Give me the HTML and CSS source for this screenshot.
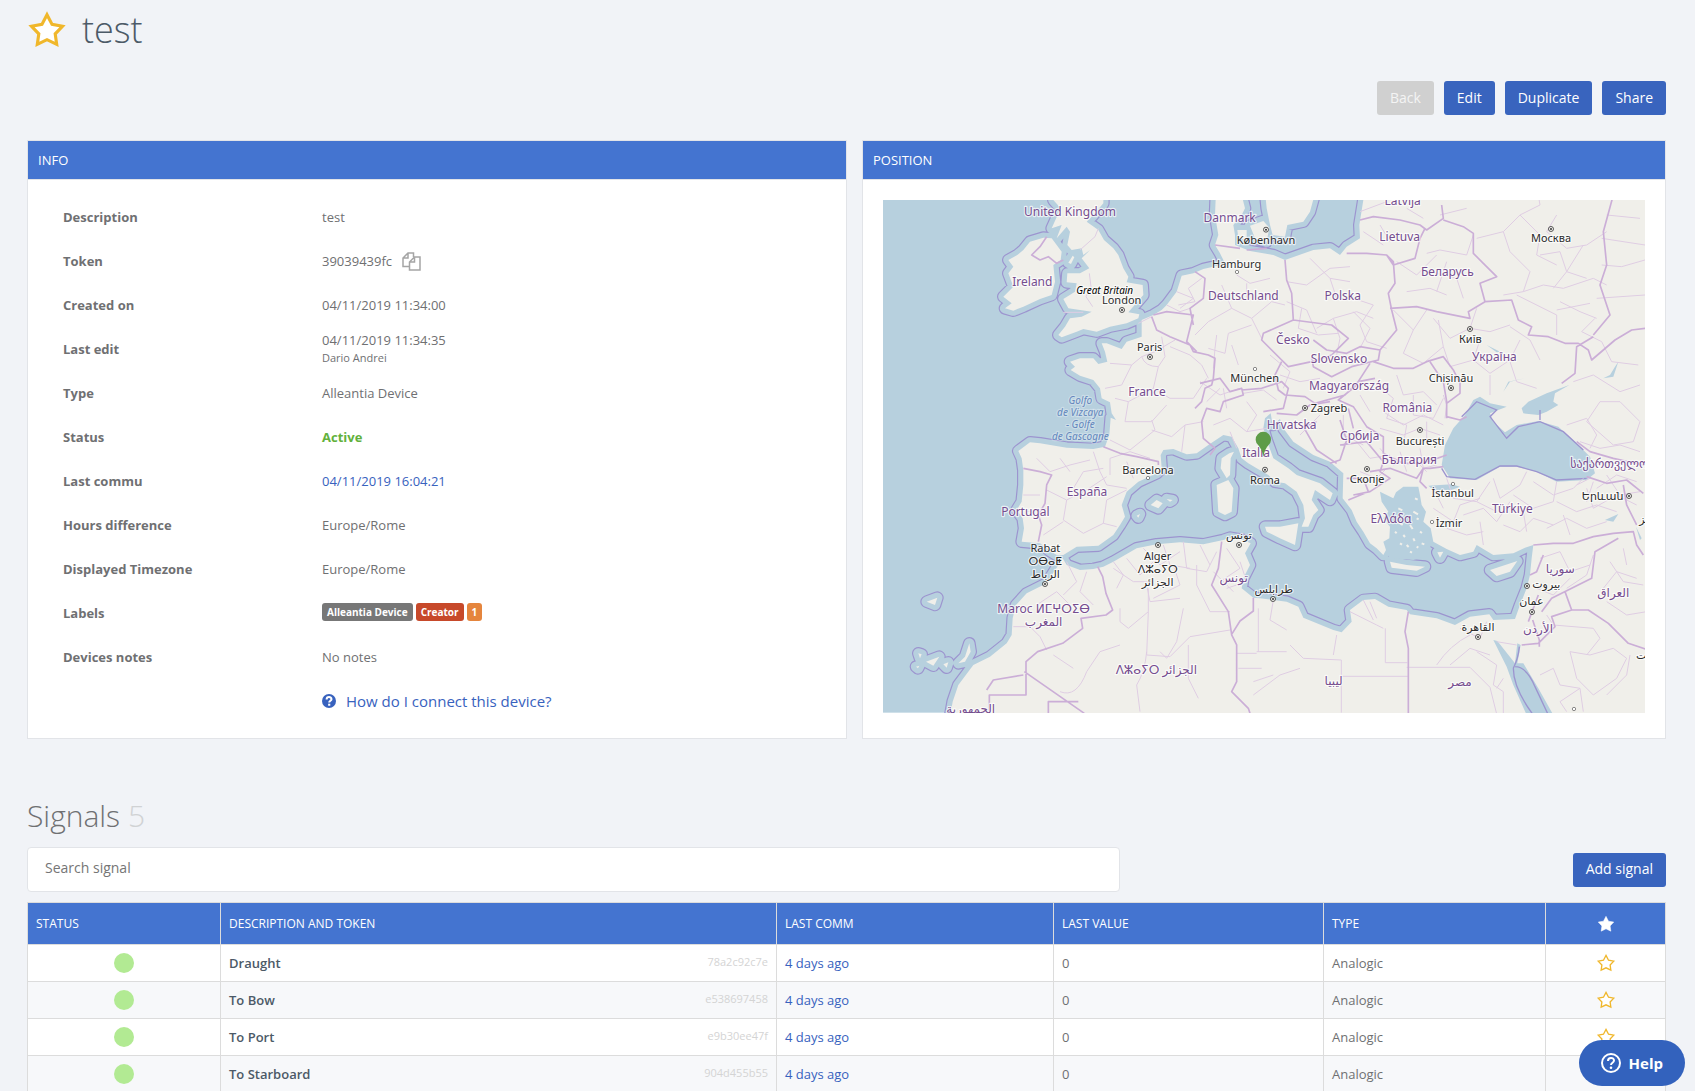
FILE: index.html
```html
<!DOCTYPE html>
<html lang="en">
<head>
    <meta charset="UTF-8">
    <meta name="viewport" content="width=device-width, initial-scale=1.0">
    <title>test</title>
    <link rel="stylesheet" href="styles.css">
</head>
<body>

<svg class="sprite" aria-hidden="true">
    <symbol id="star" viewBox="0 0 38 38">
        <path d="M19 4.500l4.800 9.200 9.900 1.700-6.900 7.300 1.400 9.900-9.200-4.400-9.200 4.400 1.400-9.900-6.900-7.300 9.900-1.700z"/>
    </symbol>
    <!-- cities: capital and plain dot -->
    <symbol id="capital" viewBox="0 0 20 20">
        <circle cx="10" cy="10" r="7.500" fill="#f7f6f3" stroke="#333" stroke-width="2.500"/>
        <circle cx="10" cy="10" r="3" fill="#333"/>
    </symbol>
    <symbol id="city" viewBox="0 0 20 20">
        <circle cx="10" cy="10" r="5" fill="#fff" stroke="#555" stroke-width="2"/>
    </symbol>
</svg>

<main class="page">
    <header class="title">
        <svg class="title-star"><use href="#star"/></svg>
        <h1>test</h1>
    </header>

    <div class="actions">
        <button class="btn" disabled>Back</button>
        <button class="btn">Edit</button>
        <button class="btn">Duplicate</button>
        <button class="btn">Share</button>
    </div>

    <div class="panels">
        <section class="panel">
            <h2 class="panel-head">INFO</h2>
            <dl class="info">
                <dt>Description</dt>
                <dd>test</dd>
                <dt>Token</dt>
                <dd>39039439fc
                    <button class="copy" aria-label="Copy token">
                        <svg viewBox="0 0 19 19">
                            <path d="M7 14.500H1V6l5-5h5.500v4M1 6h5V1M7.500 10v8h10.500V5h-5.500zM12.500 5v5h-5"/>
                        </svg>
                    </button>
                </dd>
                <dt>Created on</dt>
                <dd>04/11/2019 11:34:00</dd>
                <dt>Last edit</dt>
                <dd><div class="edit">04/11/2019 11:34:35<small>Dario Andrei</small></div></dd>
                <dt>Type</dt>
                <dd>Alleantia Device</dd>
                <dt>Status</dt>
                <dd class="active">Active</dd>
                <dt>Last commu</dt>
                <dd><a href="#">04/11/2019 16:04:21</a></dd>
                <dt>Hours difference</dt>
                <dd>Europe/Rome</dd>
                <dt>Displayed Timezone</dt>
                <dd>Europe/Rome</dd>
                <dt>Labels</dt>
                <dd class="labels">
                    <span class="label">Alleantia Device</span>
                    <span class="label red">Creator</span>
                    <span class="label orange">1</span>
                </dd>
                <dt>Devices notes</dt>
                <dd>No notes</dd>
                <dd class="howto">
                    <a href="#">
                        <svg viewBox="0 0 13 13">
                            <circle cx="6.500" cy="6.500" r="6.500" fill="#3862be"/>
                            <path d="M4.300 5C4.300 2.200 8.800 2.200 8.800 4.800 8.800 6.300 6.700 6.300 6.700 8" fill="none" stroke="#fff" stroke-width="1.900"/>
                            <path d="M5.700 9h2v1.900h-2z" fill="#fff"/>
                        </svg>
                        How do I connect this device?
                    </a>
                </dd>
            </dl>
        </section>

        <section class="panel">
            <h2 class="panel-head">POSITION</h2>
            <div class="map-wrap">
                <svg class="map" viewBox="9 15 2286 1538" role="img" aria-label="Map of Europe">
                    <defs>
                        <path id="land" d="M1010 -60L1005 60 1015 120 1005 150 1020 175 1035 205 1000 215 970 222 940 235 905 242 890 290 860 330 845 345 820 360 785 375 785 425 740 440 725 462 680 445 665 445 675 470 682 500 655 507 640 490 600 490 570 500 585 515 572 525 600 542 640 555 660 580 665 610 690 622 695 655 708 675 692 668 688 720 675 755 640 762 560 758 480 745 450 742 415 768 425 790 430 825 430 870 425 920 410 945 428 970 432 1000 425 1040 480 1045 495 1055 510 1068 530 1080 550 1080 590 1055 655 1052 700 1020 720 990 735 965 725 930 740 890 775 860 830 835 845 820 842 780 850 765 880 762 920 778 950 775 985 750 1030 720 1055 725 1075 760 1085 790 1105 805 1130 820 1165 840 1185 860 1215 865 1250 890 1270 930 1275 970 1265 995 1285 995 1300 960 1315 945 1295 915 1305 885 1350 915 1358 895 1320 865 1250 840 1225 820 1180 790 1160 735 1150 700 1155 670 1172 655 1178 690 1200 672 1210 700 1240 740 1300 780 1350 800 1390 835 1388 910 1415 945 1430 980 1450 1010 1470 1045 1490 1060 1510 1080 1518 1065 1510 1040 1528 1030 1530 995 1510 970 1525 950 1505 920 1500 890 1540 910 1548 892 1570 875 1615 875 1620 900 1625 930 1638 950 1630 980 1652 1000 1660 1040 1700 1062 1740 1080 1780 1070 1790 1050 1840 1080 1900 1075 1935 1058 1960 1050 1955 1090 1950 1140 1940 1180 1920 1230 1905 1272 1840 1275 1828 1258 1770 1265 1725 1290 1670 1270 1590 1258 1580 1245 1525 1235 1485 1212 1450 1215 1410 1245 1415 1280 1385 1312 1360 1305 1270 1268 1255 1235 1220 1220 1140 1210 1120 1208 1085 1180 1090 1150 1110 1110 1095 1075 1112 1045 1090 1035 1050 1028 1030 1035 970 1048 900 1042 830 1048 770 1060 700 1100 670 1115 640 1122 600 1125 560 1110 548 1090 535 1110 522 1130 500 1165 440 1195 408 1230 398 1270 395 1320 380 1345 330 1385 280 1410 235 1470 218 1520 200 1620 2400 1620 2400 -60 1450 -60 1450 15 1438 90 1440 130 1400 155 1380 180 1350 160 1300 165 1215 195 1180 180 1110 168 1065 150 1065 120 1060 90 1085 60 1095 40 1070 -60z
                        M520 -60L520 15 542 40 515 100 545 90 530 130 560 95 570 110 562 150 575 165 605 160 610 180 630 165 605 190 628 220 600 235 562 235 560 262 590 265 585 290 550 312 565 340 600 345 635 350 605 365 570 370 555 395 535 420 545 427 590 410 610 402 650 410 690 395 740 385 775 370 778 358 745 352 790 300 788 270 740 262 745 245 730 220 715 180 700 160 672 135 655 105 620 80 640 60 670 25 670 -60z
                        M430 165L450 140 490 128 515 130 545 170 542 195 520 210 525 260 515 300 480 312 430 335 400 347 375 340 395 325 370 305 400 275 385 235 400 215 385 195 412 180z
                        M565 203L578 182 583 187 573 207z
                        M1110 92L1150 78 1168 98 1160 140 1125 130z M1072 105L1100 105 1100 135 1075 130z
                        M1150 -60L1160 40 1170 90 1178 120 1215 125 1222 90 1270 80 1290 50 1320 -60z
                        M1062 770L1048 775 1025 790 1022 820 1040 850 1050 840 1052 790z
                        M1010 870L1045 855 1060 880 1055 950 1035 960 1015 950z
                        M1155 995L1200 995 1255 985 1245 1050 1200 1030 1160 1010z
                        M1530 1100L1580 1110 1635 1115 1610 1127 1535 1118z M1672 1072L1690 1070 1680 1088z
                        M1830 1125L1912 1098 1890 1130 1850 1143z
                        M812 930L830 915 848 925 835 940z M860 912L878 915 870 920z M770 962L780 957 775 968z
                        M235 1405L255 1385 268 1345 272 1370 255 1400z M138 1400L178 1385 160 1412z M190 1408L205 1402 200 1418z M115 1375L125 1378 120 1390z M108 1415L118 1412 114 1420z M140 1220L172 1208 165 1230z"/>
                    </defs>
                    <rect x="9" y="15" width="2286" height="1538" class="sea"/>

                    <!-- territorial waters -->
                    <use href="#land" class="waters"/>
                    <use href="#land" class="waters-in"/>
                    <path class="sea" d="M1500 880L1640 870 1655 1000 1650 1080 1600 1095 1530 1090 1500 1050z"/>
                    <use href="#land" class="land"/>

                    <!-- black sea, azov, marmara, red sea, lakes -->
                    <g class="sea">
                        <path d="M1755 660L1780 615 1800 605 1830 625 1880 635 1830 655 1840 680 1875 712 1910 690 1975 678 2035 695 2090 745 2130 785 2145 835 2120 855 2030 860 1970 830 1910 815 1860 815 1790 855 1710 850 1685 810 1690 780 1695 750 1720 700z"/>
                        <path d="M1925 640L1945 620 2000 595 2068 570 2025 595 2020 620 2035 630 2000 650 1975 660 1930 655z"/>
                        <path d="M1645 872L1715 868 1740 875 1715 885 1660 885z"/>
                        <path d="M1840 1335L1852 1338 1905 1405 1912 1345 1922 1350 1912 1405 1930 1405 1975 1480 2020 1560 1940 1560 1900 1470 1880 1415z"/>
                        <path d="M1820 450L1860 470 1850 472zM2205 515L2215 500 2200 545 2170 550 2190 540zM2175 975L2215 957 2200 980zM2268 995L2285 1030 2280 1035z"/>
                        <path d="M1870 590L1885 560 1935 550 1890 560z"/>
                    </g>
                    <path class="coast" d="M1685 820L1700 845 1785 853 1860 813 1910 813 1970 830 2030 855 2120 850M2110 765L2050 710 1980 680 1915 695 1880 730 1830 665 1850 645 1790 620 1745 665M1980 645l0 30M1900 1420Q1915 1390 1918 1355M1905 1415q35 0 60 60l40 85M1900 1420q0 60 60 140"/>
                    <path class="isles" d="M1552 980l16 10M1590 990l8 12M1570 1020l5 6M1600 1030l4 8M1620 1010l6 4M1580 1050l6 6M1610 1055l5 3M1555 940l12 6M1600 950l14 8M1610 970l6 3M1560 1045l6 4M1590 1070l6 3M1625 1045l8 3M1545 1010l5 5M1605 910l8 4"/>

                    <!-- regions -->
                    <g class="region">
                        <path d="M655 100l-10 25-45 40M628 235l5 40-15 30 20 30M550 352h60M775 385l40-20M690 505l65 5-30 60-50 10M755 510l30-25 40-15 60-35M785 485q10 30 50 30l20-30-10-60M835 515l-15 65 50 30 70 0 40-60M820 580l-75 40-40-10M745 620l-10 60 80 0 45-50M690 735l60 30 75-60-10-30M815 705l60 20 40-35 55-10M915 690l-10 80M985 550l-20-40-35-30-60-25"/>
                        <path d="M965 250l-40 30 20 40-50 10M890 290l50 20-40 30M860 330l40 20 30-10M945 420l40-40 70-40-30-70M1055 340l60 30 60-50 40 10M985 460l50 15 10-60 70-25M1075 510l-20-60M1115 370l30 60M1070 240l40 25 60-15M1100 265l0 50M1010 420l-5 40-5 60"/>
                        <path d="M1220 260l60 10 70-50 60-5M1220 320l60 25 30 70M1350 250l20 60 50 0 60 20M1310 400l50-30 70-20 50 20M1360 370l20 60-10 50M1480 330l-40 60 20 50 60 20M1290 190l60 60 60 10M1265 340l-10 60 60 20 60-5M1420 350l50 50-30 60M1540 345l60 60 40-60M1600 405l-30 70 60 30 60-50-15-80M1660 370l50 60 60-30 20-60M1690 455l20 60 70-20 20-60M1780 495l50 40 60-40 30-60M1770 400l60 10 60-20M1890 395l60 40 30 60M1830 540l0 60M1890 500l20 60 60 20"/>
                        <path d="M1640 175l40-10 80 15 20-60M1650 230l80 20 20 60M1580 290l70-10 50 20M1550 200l60 40 60-60M1700 200l-30 90M1790 130l80-20 50-50 60-30-10-60M1920 60l60 60-10 60 60 30M1870 110l20 60 60 60-20 60-60 10M2030 60l-30 50 60 50 60-10 60-40M1980 180l60-10 20 60-40 50M1930 290l60-20 60 10 90-30 40 20M2110 150l-50 80 60 20M1910 300l120 60 0 60M2040 320l60 30 50 20M2030 345l100-20M2180 60l100 10M2165 130l130 20M2165 210l60 5 70-20M2150 310l145-10M2145 370l-40 40 60 30 30 60 80 10M2080 560l60-20 80 50 60-20M2120 680l40-60 60 0 60 60-20 60-60 10zM2060 690l60-20 30 50-20 40M2100 740l60 20 60-10 60 20M1440 50l80-30M1450 110l60 40M1500 90l30 50M1580 40l50 30M1680 60l80-20"/>
                        <path d="M1100 620l30 40-30 50M1000 690l50-20 50 40 60-10M1050 710l20 50M960 560l60 40 60-20M980 620l40-40M1030 580l10 60M1090 595l60-10 40 30M1170 480l60 50-20 50M1200 540l60 20 60-10M1320 660l-60 60M1390 660l0 60 60 30M1480 560l60 50-20 60 60 20M1550 540l20 60 60-10 40 40M1600 600l0 60 60 10 30-60M1510 650l60 40 60-30 60 30M1500 700l70 20 50-20 60 20M1580 690l-10 60M1640 680l0 60M1430 740l40 50 60-10M1500 760l40 50 60-20 40 40M1560 770l20 60M1620 760l10 60 40-10M1440 830l50 20 30-30M1690 600l10 30-5 40M1440 600l30 50"/>
                        <path d="M500 885l60 30 60-30 60-40M580 880l30-50 60-10M470 790l40 40 60-20 60-15M540 790l30 40M640 770l20 60 20 40 60 10M560 915l-10 60 60 40 60-30 40 10M670 985l10-70 60-30M550 980l-60 40M500 940l-60 10M430 900l50 0M690 840l0-50 60-20 60 20M740 800l20 50"/>
                        <path d="M1660 940l60 40 20-50 60-20M1700 850l20 60 70 10 40-60M1750 960l60-20 40 40 40-60M1840 850l20 60 60-40 20-40M1900 900l60 40 60-20 10-60M1960 860l60 40 60-20 30-30M1870 990l50 20 40-40 60 20M1800 980l10 70M2030 920l60 30 60-20 60 20M2050 960l20 60M2120 880l20 60 70-40 60 30M2180 840l40 60 60-10M2140 860l-20 60M1930 950l10 60M2000 1000l60-30 60 30 60-20M1700 1000l60 20 50-10M1660 880l30 60M1790 920l60 30M2150 880l60-40 60 20M2090 870l40-20"/>
                        <path d="M700 1100l30 40-20 40M740 1090l40 50 40-40M790 1060l50 50 60-40M850 1050l20 60 60 10M910 1040l10 80 60 10 30-60M960 1050l30 60M800 1170l10 50 90-10M880 1110l20 60-80 40M950 1110l0 60 40 80h60M700 1120l60 40 60 0M720 1240v40l25 20 60-50v-70M805 1250l-5 130 70 5 60-60 120-20M925 1350v100l30 60M800 1370q-5 60-30 100l10 80M840 1370l20 20 30-50 20-100M580 1420l-60-40M620 1430l40-60 60-20M620 1430q-30 80-80 60M560 1100l30 60-40 40M620 1130l-20 60 40 40M470 1230l60-40 40 40M400 1295h50l30 30 20 40M1080 1100l20 60-60 20M1040 1060l40 60-60 40M1000 1130l60 60M1070 1375h60M1075 1420h70M1135 1240v130M1120 1460l60-20M1120 1500l80-60 60-20"/>
                        <path d="M1180 1215l-10 60 50 30M1220 1370l-90 0M1230 1350l40 40 114 5v158M1370 1320l-10 60M1384 1444h200M1516 1300v103h66M1410 1250l80 40 20 10M1450 1215l30 60M1470 1220l20 50M1580 1417h190l60 60 20 80M1670 1410q40-60 100-90M1710 1410l60-50 60 20M1790 1370l60 40-10 60 30 20v70M1850 1480l20-30M1740 1300l60 30 20-50M1850 1340l60 10M2000 1260l20 30 120 10 20 30-40 50M2070 1370l60 10 70-20 40 30-30 60-70 50-50-50zM1980 1440l40-20 20 50 60 10 10 70M2100 1480l-60 40 20 30M2180 1500l60-60 10-60M1980 1090l60-20 30 60 60-20M2060 1180l60-40 20-60M2170 1180l40-50 60 20M2190 1100l40 60 60 10M2180 1220l60 40 60-10M1970 1180l50 20 50-50M2230 1060l10 50"/>
                    </g>

                    <!-- countries -->
                    <g class="country">
                        <path d="M500 125l-20 30-25 25 25 15 25-10 25 20 20-10M430 820l50 10 35 10-15 30-5 55-20 35 10 30-10 50M670 755l50 20 50 10 65 15 0 10M815 365l15 40 40 20 60 25 10 20 45 10 20 10-5 60-5 20-20 10-10 40-20 20M820 360l40-10 80 10-20 80 30 30M945 230l30 20-5 60-40 30 10 50M960 565l60-15 30 40 35-10 5 20-60 20-10 30-40-10-15 40 5 50 35 30-15 20M1085 585l60-5 60-20 20 20-15 60-60 10M1005 150l75 10M1100 165l60-5"/>
                        <path d="M1215 195l5 60 15 40 5 80-90 40-5 20 60 60 20 20 70-15 60-20 50-50-50-40-115-15M1300 435l40 30 60 10 40-20 60 10-5 30-80 20-60 30-55-30-5-30M1205 500l-20 40 10 45 20 15 60 5 30 20 90-25 40-40 50-10M1500 465l50-60-15-60-10-50 20-30-5-65-20-20-60-5h-60M1440 75l40-10 80 10 60 15 20 15 50-35-5-40M1520 180l20 30 65-20 15-60 15-30M1690 75l60 20 30 20 0 60 30 30 40 40-50 20 15 55 80-5 20 60 40 20-10 25 60 5 50 20 40 0 30 20 10 30 70-60 50-30 80-10M1530 340l80-5 60 15 100 20-5-20 50-30M1480 500l60 20 60 0 40-20 50-15 30 40 20 40 0 30-40 30 0 40 40 10 20-10M1650 500l40 60 10 60 0 50M1470 505l-45 70-50 40 45 20 40 60 50 30 0 50 60 30 60 0 70-25M2140 425l-50 30-5 80-40 30M2090 740l40 30 70 20 90 20M2200 0l-30 110 10 100-20 60 30 90-50 60"/>
                        <path d="M1190 655l60 5 40-30 60-10M1310 680l-40 15 40 70 60 40M1380 675l20 60-20 60-30 10M1405 640l15 60M1380 750l80-10 50 60-10 30 30 20-60 40-50 10M1470 830l60-10 80 30 20-30 20 0 40-5M1630 820l-10 40 20 20M1400 850l50 0 15 40-60 25M1960 1050l60-5 60 0 60-20 60-10 60-5 10 40 20 30M2120 845l60 20 60-10 50 40M2230 870l10 60 30 60M2215 1030l-70 40-10 80-120 60-30 40M2055 1190l20 55 50 0 60 40 60 60 60 20M2075 1245l-60 20 10 30-50 50-50 5M1958 1275l20 60 0 20M1950 1140l20-10 20-50M1585 1250l-10 60 10 50v200M1975 1200l-30 80M653 1115l15 30 10 50 20 50-20 15-75 10 5 30-60 45-75 25-35 30v100h-110v60M433 1430l180 125M320 1485l20-30 90-15M1025 1040l-10 80-20 50 50 80 10 70 15 30v110l-15 30 50 50 10 30M1120 1208l0 40-40 30-25 40M505 1560v-40h90"/>
                    </g>

                    <!-- labels -->
                    <g class="names">
                        <text x="570" y="62">United Kingdom</text>
                        <text x="457" y="273">Ireland</text>
                        <text x="1049" y="81">Danmark</text>
                        <text x="1090" y="314">Deutschland</text>
                        <text x="1568" y="31">Latvija</text>
                        <text x="1559" y="138">Lietuva</text>
                        <text x="1702" y="243">Беларусь</text>
                        <text x="1388" y="314">Polska</text>
                        <text x="1239" y="446">Česko</text>
                        <text x="1377" y="504">Slovensko</text>
                        <text x="1843" y="497">Україна</text>
                        <text x="1407" y="586">Magyarország</text>
                        <text x="801" y="603">France</text>
                        <text x="1582" y="652">România</text>
                        <text x="1235" y="702">Hrvatska</text>
                        <text x="1439" y="734">Србија</text>
                        <text x="1128" y="786">Italia</text>
                        <text x="1588" y="807">България</text>
                        <text x="2188" y="818">საქართველო</text>
                        <text x="621" y="903">España</text>
                        <text x="436" y="962">Portugal</text>
                        <text x="1897" y="953">Türkiye</text>
                        <text x="1533" y="984">Ελλάδα</text>
                        <text x="1061" y="1161">تونس</text>
                        <text x="2041" y="1135">سوريا</text>
                        <text x="2200" y="1205">العراق</text>
                        <text x="491" y="1253">Maroc ⵍⵎⵖⵔⵉⴱ</text>
                        <text x="491" y="1292">المغرب</text>
                        <text x="1974" y="1315">الأردن</text>
                        <text x="829" y="1438">ⴷⵣⴰⵢⵔ الجزائر</text>
                        <text x="1361" y="1470">ليبيا</text>
                        <text x="1740" y="1472">مصر</text>
                        <text x="272" y="1553">الجمهورية</text>
                    </g>
                    <g class="cities">
                        <text x="1158" y="146">København</text>
                        <text x="1070" y="218">Hamburg</text>
                        <text x="725" y="326">London</text>
                        <text x="809" y="467">Paris</text>
                        <text x="1124" y="560">München</text>
                        <text x="2013" y="141">Москва</text>
                        <text x="1771" y="443">Київ</text>
                        <text x="1713" y="560">Chișinău</text>
                        <text x="1347" y="652">Zagreb</text>
                        <text x="1620" y="749">București</text>
                        <text x="804" y="836">Barcelona</text>
                        <text x="1155" y="866">Roma</text>
                        <text x="1461" y="863">Скопје</text>
                        <text x="1718" y="906">İstanbul</text>
                        <text x="1707" y="995">İzmir</text>
                        <text x="2168" y="914">Երևան</text>
                        <text x="496" y="1070">Rabat</text>
                        <text x="496" y="1110">ⵔⴱⴰⵟ</text>
                        <text x="496" y="1148">الرباط</text>
                        <text x="833" y="1095">Alger</text>
                        <text x="833" y="1135">ⴷⵣⴰⵢⵔ</text>
                        <text x="833" y="1174">الجزائر</text>
                        <text x="1077" y="1032">تونس</text>
                        <text x="1181" y="1195">طرابلس</text>
                        <text x="1999" y="1180">بيروت</text>
                        <text x="1954" y="1230">عمان</text>
                        <text x="1794" y="1308">القاهرة</text>
                        <text x="2310" y="984">تبريز</text>
                        <text x="2316" y="1392">الكويت</text>
                    </g>
                    <text class="island" x="674" y="298">Great Britain</text>
                    <g class="gulf">
                        <text x="601" y="627">Golfo</text>
                        <text x="601" y="663">de Vizcaya</text>
                        <text x="601" y="699">- Golfe</text>
                        <text x="601" y="734">de Gascogne</text>
                    </g>

                    <g>
                        <use href="#capital" x="1148" y="94" width="20" height="20"/>
                        <use href="#capital" x="716" y="335" width="20" height="20"/>
                        <use href="#capital" x="800" y="476" width="20" height="20"/>
                        <use href="#capital" x="2003" y="92" width="20" height="20"/>
                        <use href="#capital" x="1760" y="392" width="20" height="20"/>
                        <use href="#capital" x="1703" y="569" width="20" height="20"/>
                        <use href="#capital" x="1265" y="629" width="20" height="20"/>
                        <use href="#capital" x="1610" y="695" width="20" height="20"/>
                        <use href="#capital" x="1145" y="814" width="20" height="20"/>
                        <use href="#capital" x="1451" y="812" width="20" height="20"/>
                        <use href="#capital" x="2237" y="893" width="20" height="20"/>
                        <use href="#capital" x="485" y="1157" width="20" height="20"/>
                        <use href="#capital" x="824" y="1040" width="20" height="20"/>
                        <use href="#capital" x="1067" y="1040" width="20" height="20"/>
                        <use href="#capital" x="1169" y="1202" width="20" height="20"/>
                        <use href="#capital" x="1931" y="1163" width="20" height="20"/>
                        <use href="#capital" x="1946" y="1241" width="20" height="20"/>
                        <use href="#capital" x="1784" y="1316" width="20" height="20"/>
                        <use href="#city" x="1061" y="221" width="20" height="20"/>
                        <use href="#city" x="1115" y="512" width="20" height="20"/>
                        <use href="#city" x="794" y="839" width="20" height="20"/>
                        <use href="#city" x="1709" y="857" width="20" height="20"/>
                        <use href="#city" x="1646" y="971" width="20" height="20"/>
                        <use href="#city" x="2072" y="1532" width="20" height="20"/>
                    </g>

                    <!-- device marker -->
                    <path d="M1150 785q-4-22-15-34a23 23 0 1 1 30 0q-11 12-15 34z" fill="#5e9c48"/>
                </svg>
            </div>
        </section>
    </div>

    <h2 class="signals-title">Signals <span>5</span></h2>
    <div class="toolbar">
        <input class="search" type="text" placeholder="Search signal" aria-label="Search signal">
        <button class="btn">Add signal</button>
    </div>

    <table class="signals">
        <colgroup>
            <col class="c-status"><col class="c-desc"><col class="c-comm"><col class="c-value"><col class="c-type"><col class="c-star">
        </colgroup>
        <thead>
            <tr>
                <th>STATUS</th>
                <th>DESCRIPTION AND TOKEN</th>
                <th>LAST COMM</th>
                <th>LAST VALUE</th>
                <th>TYPE</th>
                <th class="center"><svg class="star full"><use href="#star"/></svg></th>
            </tr>
        </thead>
        <tbody>
            <tr>
                <td class="center"><span class="dot"></span></td>
                <td><div class="name"><b>Draught</b><span>78a2c92c7e</span></div></td>
                <td><a href="#">4 days ago</a></td>
                <td>0</td>
                <td>Analogic</td>
                <td class="center"><svg class="star"><use href="#star"/></svg></td>
            </tr>
            <tr>
                <td class="center"><span class="dot"></span></td>
                <td><div class="name"><b>To Bow</b><span>e538697458</span></div></td>
                <td><a href="#">4 days ago</a></td>
                <td>0</td>
                <td>Analogic</td>
                <td class="center"><svg class="star"><use href="#star"/></svg></td>
            </tr>
            <tr>
                <td class="center"><span class="dot"></span></td>
                <td><div class="name"><b>To Port</b><span>e9b30ee47f</span></div></td>
                <td><a href="#">4 days ago</a></td>
                <td>0</td>
                <td>Analogic</td>
                <td class="center"><svg class="star"><use href="#star"/></svg></td>
            </tr>
            <tr>
                <td class="center"><span class="dot"></span></td>
                <td><div class="name"><b>To Starboard</b><span>904d455b55</span></div></td>
                <td><a href="#">4 days ago</a></td>
                <td>0</td>
                <td>Analogic</td>
                <td class="center"><svg class="star"><use href="#star"/></svg></td>
            </tr>
        </tbody>
    </table>
</main>

<button class="help">
    <svg viewBox="0 0 20 20">
        <circle cx="10" cy="10" r="9" fill="none" stroke="#fff" stroke-width="2"/>
        <path d="M7 8c0-4 6-4 6-.500 0 2.300-3 2.200-3 4.500" fill="none" stroke="#fff" stroke-width="2"/>
        <circle cx="10" cy="14.700" r="1.300" fill="#fff"/>
    </svg>
    Help
</button>

</body>
</html>
```

FILE: styles.css
```css
* {
    box-sizing: border-box;
}
body {
    margin: 0;
    font-family: 'Open Sans', 'Noto Sans', sans-serif;
    font-size: 13px;
    color: #6f7072;
    background-color: #f1f3f7;
    overflow: hidden;
}
a {
    color: #3862be;
    text-decoration: none;
}
button {
    font-family: inherit;
    border: none;
    cursor: pointer;
}
.sprite {
    display: none;
}
.page {
    padding: 0 29px 0 27px;
}
.title {
    display: flex;
    align-items: center;
    gap: 15px;
    height: 60px;
}
.title-star {
    width: 40px;
    height: 40px;
    fill: #fff;
    stroke: #f0b72b;
    stroke-width: 3;
}
h1 {
    margin: 0;
    font-size: 36px;
    font-weight: 300;
    line-height: 60px;
    color: #4c5a67;
}
.actions {
    display: flex;
    justify-content: flex-end;
    gap: 10px;
    padding: 21px 0 25px;
}
.btn {
    height: 34px;
    padding: 0 13px 2px;
    font-size: 14px;
    color: #fff;
    background-color: #3964be;
    border-radius: 3px;
}
.btn:disabled {
    color: #f4f4f4;
    background-color: #d0d0d0;
}

/* panels */
.panels {
    display: grid;
    grid-template-columns: 820fr 804fr;
    gap: 15px;
}
.panel {
    background-color: #fff;
    border: 1px solid #e2e4e8;
}
.panel-head {
    margin: 0;
    padding: 0 10px;
    font-size: 13px;
    font-weight: 400;
    line-height: 38px;
    color: #fff;
    background-color: #4474d0;
    border-bottom: 1px solid #e2e4e8;
}
.info {
    display: grid;
    grid-template-columns: 259px 1fr;
    grid-auto-rows: 44px;
    align-items: center;
    margin: 0;
    padding: 15px 35px;
}
.info dt {
    font-weight: 700;
}
.info dd {
    display: flex;
    align-items: center;
    margin: 0;
}
.info .active {
    font-weight: 700;
    color: #62b13c;
}
.copy {
    padding: 0;
    margin-left: 10px;
    background: none;
}
.copy svg {
    display: block;
    width: 19px;
    height: 19px;
    fill: none;
    stroke: #a5a5a5;
    stroke-width: 1.5;
}
.edit {
    line-height: 17px;
}
.edit small {
    display: block;
    font-size: 11px;
}
.info .labels {
    gap: 3px;
    padding-bottom: 3px;
}
.label {
    padding: 0 5px;
    font-size: 10px;
    font-weight: 700;
    line-height: 18px;
    color: #fff;
    background-color: #777;
    border-radius: 3px;
}
.label.red {
    background-color: #c7492a;
}
.label.orange {
    background-color: #e5853d;
}
.info .howto {
    grid-column: 2;
    font-size: 15px;
}
.howto a {
    display: flex;
    align-items: center;
    gap: 10px;
}
.howto svg {
    width: 14px;
    height: 14px;
}

/* map */
.map-wrap {
    padding: 20px 20px 25px;
}
.map {
    display: block;
    width: 100%;
}
.waters {
    fill: none;
    stroke: #9c94cf;
    stroke-width: 38;
    stroke-linejoin: round;
}
.waters-in {
    fill: #b7d0de;
    stroke: #b7d0de;
    stroke-width: 31;
    stroke-linejoin: round;
}
.land {
    fill: #f0efea;
}
.sea {
    fill: #b7d0de;
}
.coast {
    fill: none;
    stroke: #9c94cf;
    stroke-width: 4;
}
.isles {
    stroke: #f0efea;
    stroke-width: 6;
}
.region, .country {
    fill: none;
    stroke: #dfcde3;
    stroke-width: 3;
    stroke-linejoin: round;
}
.country {
    stroke: #cbaed7;
    stroke-width: 5;
}
.map text {
    font-family: 'Noto Sans', 'DejaVu Sans', sans-serif;
    font-size: 33px;
    text-anchor: middle;
    fill: #2b2b2b;
    stroke: #fff;
    stroke-opacity: 0.7;
    stroke-width: 7;
    stroke-linejoin: round;
    paint-order: stroke;
}
.map .names text {
    font-size: 36px;
    fill: #754d8f;
}
.map .island {
    font-size: 30px;
    font-style: italic;
    fill: #000;
}
.map .gulf text {
    font-size: 30px;
    font-style: italic;
    fill: #6487bd;
    stroke-opacity: 0.3;
}

/* signals */
.signals-title {
    margin: 55px 0 9px;
    font-size: 30px;
    font-weight: 300;
    line-height: 44px;
}
.signals-title span {
    color: #d0d2d4;
}
.toolbar {
    display: flex;
    justify-content: space-between;
    align-items: center;
    margin-bottom: 10px;
}
.search {
    width: 66.66%;
    height: 45px;
    padding: 0 17px 4px;
    font-family: inherit;
    font-size: 14px;
    border: 1px solid #e2e4e8;
    border-radius: 4px;
}
.search::placeholder {
    color: #757575;
}
.signals {
    width: 100%;
    table-layout: fixed;
    border-collapse: collapse;
    background-color: #fff;
}
.c-status { width: 193px; }
.c-comm { width: 277px; }
.c-value { width: 270px; }
.c-type { width: 222px; }
.c-star { width: 120px; }
.signals th, .signals td {
    height: 37px;
    padding: 0 8px;
    text-align: left;
    border: 1px solid #dcdcdc;
}
.signals th {
    height: 42px;
    font-size: 12px;
    font-weight: 400;
    color: #fff;
    background-color: #4474d0;
}
.signals tbody tr:nth-child(even) {
    background-color: #f7f8fa;
}
.signals .center {
    text-align: center;
}
.dot {
    display: block;
    width: 20px;
    height: 20px;
    margin: 0 auto;
    background-color: #b2ea93;
    border-radius: 50%;
}
.name {
    display: flex;
    justify-content: space-between;
}
.name b {
    font-weight: 600;
    color: #4c5a67;
}
.name span {
    font-size: 11px;
    color: #d4d4d4;
}
.star {
    display: block;
    width: 20px;
    height: 20px;
    margin: 0 auto;
    fill: #fff;
    stroke: #f0b72b;
    stroke-width: 2.5;
}
.star.full {
    stroke: #fff;
    stroke-width: 1;
}
.help {
    position: fixed;
    right: 10px;
    bottom: 5px;
    display: flex;
    align-items: center;
    gap: 8px;
    height: 46px;
    padding: 0 22px;
    font-size: 15px;
    font-weight: 700;
    color: #fff;
    background-color: #3362bd;
    border-radius: 23px;
}
.help svg {
    width: 20px;
    height: 20px;
}
```
